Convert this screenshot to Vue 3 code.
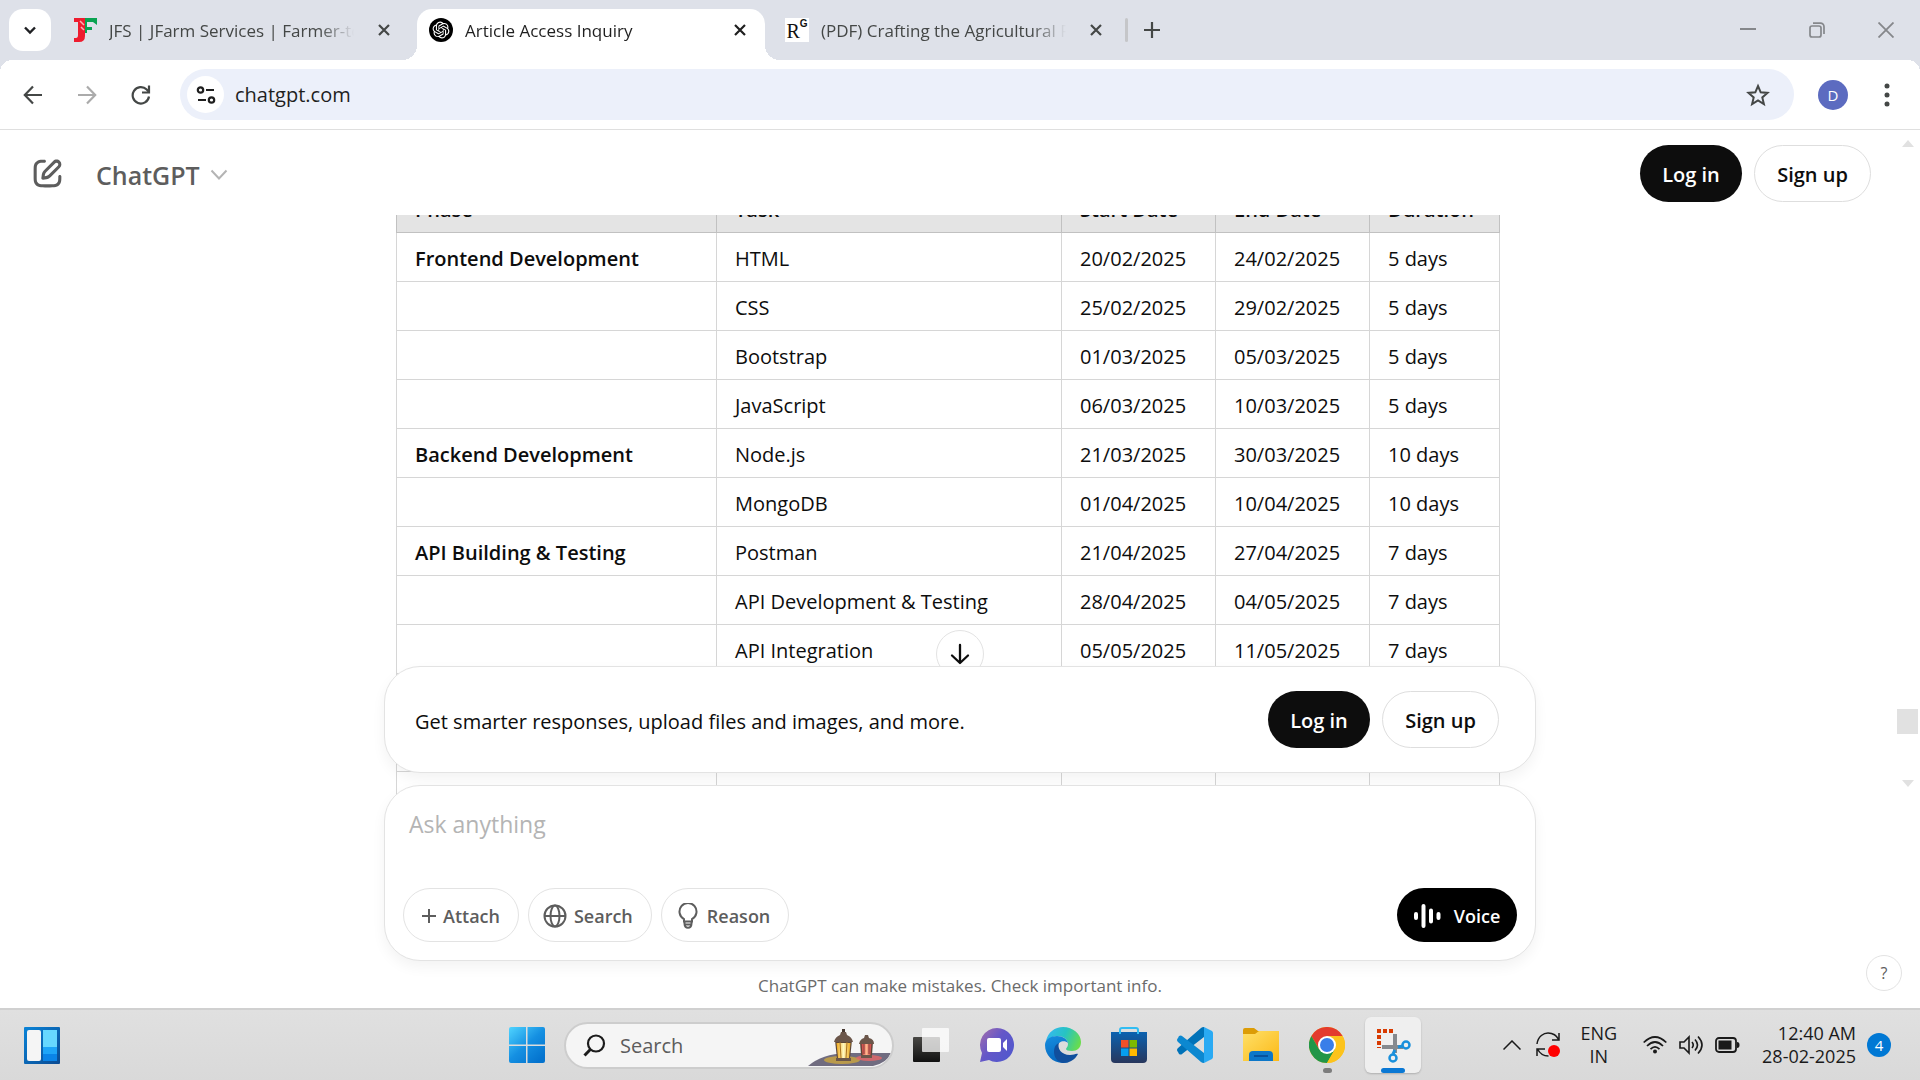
<script setup>
const columns = ['Phase', 'Task', 'Start Date', 'End Date', 'Duration']
const rows = [
  ['Frontend Development', 'HTML', '20/02/2025', '24/02/2025', '5 days'],
  ['', 'CSS', '25/02/2025', '29/02/2025', '5 days'],
  ['', 'Bootstrap', '01/03/2025', '05/03/2025', '5 days'],
  ['', 'JavaScript', '06/03/2025', '10/03/2025', '5 days'],
  ['Backend Development', 'Node.js', '21/03/2025', '30/03/2025', '10 days'],
  ['', 'MongoDB', '01/04/2025', '10/04/2025', '10 days'],
  ['API Building & Testing', 'Postman', '21/04/2025', '27/04/2025', '7 days'],
  ['', 'API Development & Testing', '28/04/2025', '04/05/2025', '7 days'],
  ['', 'API Integration', '05/05/2025', '11/05/2025', '7 days'],
  ['', '', '', '', ''],
  ['', '', '', '', ''],
  ['', '', '', '', ''],
]
</script>

<template>
  <div class="screen">
    <header class="tabstrip">
      <button class="tab-search" aria-label="Search tabs">
        <svg width="14" height="14" viewBox="0 0 14 14" fill="none" stroke="#1f2023" stroke-width="2.4"><path d="M2 4.5l5 5 5-5" /></svg>
      </button>
      <nav class="tabs">
        <div class="tab">
          <svg class="favicon" viewBox="0 0 24 24">
            <path d="M1 0h11v18q0 6-6 6H1v-4h2q2 0 2-3V4H1z" fill="#ee1c2e" />
            <path d="M12 0h12v7l-4-3h-6v5h5v3h-5v3h-2z" fill="#0aa351" />
            <path d="M7 3l4 4M8 9l3 3" stroke="#ffb0b4" stroke-width="1.5" />
          </svg>
          <a class="tab-title" href="#">JFS | JFarm Services | Farmer-to-Business</a>
          <button class="tab-close" aria-label="Close tab"><svg width="14" height="14" viewBox="0 0 14 14" stroke="#444746" stroke-width="2.2"><path d="M2 2l10 10M12 2L2 12" /></svg></button>
        </div>
        <div class="tab active">
          <svg class="favicon" viewBox="0 0 24 24">
            <circle cx="12" cy="12" r="12" fill="#000" />
            <g transform="translate(3.6 3.6) scale(.7)"><path fill="#fff" d="M22.2819 9.8211a5.9847 5.9847 0 0 0-.5157-4.9108 6.0462 6.0462 0 0 0-6.5098-2.9A6.0651 6.0651 0 0 0 4.9807 4.1818a5.9847 5.9847 0 0 0-3.9977 2.9 6.0462 6.0462 0 0 0 .7427 7.0966 5.98 5.98 0 0 0 .511 4.9107 6.051 6.051 0 0 0 6.5146 2.9001A5.9847 5.9847 0 0 0 13.2599 24a6.0557 6.0557 0 0 0 5.7718-4.2058 5.9894 5.9894 0 0 0 3.9977-2.9001 6.0557 6.0557 0 0 0-.7475-7.0729zm-9.022 12.6081a4.4755 4.4755 0 0 1-2.8764-1.0408l.1419-.0804 4.7783-2.7582a.7948.7948 0 0 0 .3927-.6813v-6.7369l2.02 1.1686a.071.071 0 0 1 .038.052v5.5826a4.504 4.504 0 0 1-4.4945 4.4944zm-9.6607-4.1254a4.4708 4.4708 0 0 1-.5346-3.0137l.142.0852 4.783 2.7582a.7712.7712 0 0 0 .7806 0l5.8428-3.3685v2.3324a.0804.0804 0 0 1-.0332.0615L9.74 19.9502a4.4992 4.4992 0 0 1-6.1408-1.6464zM2.3408 7.8956a4.485 4.485 0 0 1 2.3655-1.9728V11.6a.7664.7664 0 0 0 .3879.6765l5.8144 3.3543-2.0201 1.1685a.0757.0757 0 0 1-.071 0l-4.8303-2.7865A4.504 4.504 0 0 1 2.3408 7.872zm16.5963 3.8558L13.1038 8.364 15.1192 7.2a.0757.0757 0 0 1 .071 0l4.8303 2.7913a4.4944 4.4944 0 0 1-.6765 8.1042v-5.6772a.79.79 0 0 0-.407-.667zm2.0107-3.0231l-.142-.0852-4.7735-2.7818a.7759.7759 0 0 0-.7854 0L9.409 9.2297V6.8974a.0662.0662 0 0 1 .0284-.0615l4.8303-2.7866a4.4992 4.4992 0 0 1 6.6802 4.66zM8.3065 12.863l-2.02-1.1638a.0804.0804 0 0 1-.038-.0567V6.0742a4.4992 4.4992 0 0 1 7.3757-3.4537l-.142.0805L8.704 5.459a.7948.7948 0 0 0-.3927.6813zm1.0976-2.3654l2.602-1.4998 2.6069 1.4998v2.9994l-2.5974 1.4997-2.6067-1.4997Z" /></g>
          </svg>
          <a class="tab-title" href="#">Article Access Inquiry</a>
          <button class="tab-close" aria-label="Close tab"><svg width="14" height="14" viewBox="0 0 14 14" stroke="#1f1f1f" stroke-width="2.2"><path d="M2 2l10 10M12 2L2 12" /></svg></button>
        </div>
        <div class="tab">
          <span class="favicon rg">R<sup>G</sup></span>
          <a class="tab-title" href="#">(PDF) Crafting the Agricultural Platform</a>
          <button class="tab-close" aria-label="Close tab"><svg width="14" height="14" viewBox="0 0 14 14" stroke="#444746" stroke-width="2.2"><path d="M2 2l10 10M12 2L2 12" /></svg></button>
        </div>
      </nav>
      <span class="tab-divider"></span>
      <button class="new-tab" aria-label="New tab"><svg width="16" height="16" viewBox="0 0 16 16" stroke="#444746" stroke-width="2.2"><path d="M8 0v16M0 8h16" /></svg></button>
      <div class="window-controls">
        <button aria-label="Minimize"><svg width="16" height="16" viewBox="0 0 16 16" stroke="#85878b" stroke-width="2"><path d="M0 7h16" /></svg></button>
        <button aria-label="Restore"><svg width="16" height="16" viewBox="0 0 16 16" fill="none" stroke="#85878b" stroke-width="1.7"><rect x="1" y="4" width="11" height="11" rx="2" /><path d="M4 1.2h7.5a3.5 3.5 0 0 1 3.5 3.5V12" /></svg></button>
        <button aria-label="Close"><svg width="16" height="16" viewBox="0 0 16 16" stroke="#85878b" stroke-width="1.8"><path d="M.5.5l15 15M15.5.5l-15 15" /></svg></button>
      </div>
    </header>

    <div class="toolbar">
      <button class="tool" aria-label="Back"><svg width="20" height="20" viewBox="0 0 20 20" fill="none" stroke="#444746" stroke-width="2.2"><path d="M19 10H2M10 1.5L1.8 10l8.2 8.5" /></svg></button>
      <button class="tool" aria-label="Forward"><svg width="20" height="20" viewBox="0 0 20 20" fill="none" stroke="#ababab" stroke-width="2.2"><path d="M1 10h17M10 1.5l8.2 8.5-8.2 8.5" /></svg></button>
      <button class="tool" aria-label="Reload"><svg width="20" height="20" viewBox="0 0 20 20" fill="none" stroke="#444746" stroke-width="2.2"><path d="M18 11.5a8.200 8.200 0 1 1-2.300-7L18 7" /><path d="M18 .5V7.5h-7" /></svg></button>
      <div class="omnibox">
        <button class="site-info" aria-label="View site information"><svg width="20" height="20" viewBox="0 0 20 20" fill="none" stroke="#1f1f1f" stroke-width="2.2"><circle cx="4.5" cy="5" r="2.7" /><path d="M10 5h8M2 15h8" /><circle cx="15.5" cy="15" r="2.7" /></svg></button>
        <input class="address" aria-label="Address" value="chatgpt.com" />
        <button class="star" aria-label="Bookmark this tab"><svg width="24" height="24" viewBox="0 0 24 24" fill="none" stroke="#444746" stroke-width="2"><path d="M12 3l2.7 6.3 6.8.6-5.2 4.5 1.6 6.7L12 17.5 6.1 21.1l1.6-6.7L2.5 9.9l6.8-.6z" /></svg></button>
      </div>
      <button class="avatar" aria-label="Profile">D</button>
      <button class="menu" aria-label="Menu"><svg width="6" height="26" viewBox="0 0 6 26" fill="#444746"><circle cx="3" cy="4" r="2.5" /><circle cx="3" cy="13" r="2.5" /><circle cx="3" cy="22" r="2.5" /></svg></button>
    </div>

    <main class="page">
      <div class="page-head">
        <button class="compose" aria-label="New chat"><svg width="37" height="37" viewBox="0 0 24 24" fill="#5d5d5d"><path d="M15.6729 3.91287C16.8918 2.69392 18.8682 2.69392 20.0871 3.91287C21.3061 5.13182 21.3061 7.10813 20.0871 8.32708L14.1499 14.2643C13.3849 15.0293 12.3925 15.5255 11.3215 15.6785L9.14142 15.9899C8.82983 16.0344 8.51546 15.9297 8.29289 15.7071C8.07033 15.4845 7.96554 15.1701 8.01005 14.8586L8.32149 12.6785C8.47449 11.6075 8.97072 10.615 9.7357 9.85006L15.6729 3.91287ZM18.6729 5.32708C18.235 4.88918 17.525 4.88918 17.0871 5.32708L11.1499 11.2643C10.6909 11.7233 10.3932 12.3187 10.3014 12.9613L10.1785 13.8215L11.0386 13.6986C11.6812 13.6068 12.2767 13.3091 12.7357 12.8501L18.6729 6.91287C19.1108 6.47497 19.1108 5.76499 18.6729 5.32708ZM11 3.99929C11.0004 4.55157 10.5531 4.99963 10.0008 5.00007C9.00227 5.00084 8.29769 5.00827 7.74651 5.06064C7.20685 5.11191 6.88488 5.20117 6.63803 5.32695C6.07354 5.61457 5.6146 6.07351 5.32698 6.63799C5.19279 6.90135 5.10062 7.24904 5.05118 7.8542C5.00078 8.47105 5 9.26336 5 10.4V13.6C5 14.7366 5.00078 15.5289 5.05118 16.1457C5.10062 16.7509 5.19279 17.0986 5.32698 17.3619C5.6146 17.9264 6.07354 18.3854 6.63803 18.673C6.90138 18.8072 7.24907 18.8993 7.85424 18.9488C8.47108 18.9992 9.26339 19 10.4 19H13.6C14.7366 19 15.5289 18.9992 16.1458 18.9488C16.7509 18.8993 17.0986 18.8072 17.362 18.673C17.9265 18.3854 18.3854 17.9264 18.673 17.3619C18.7988 17.1151 18.8881 16.7931 18.9393 16.2535C18.9917 15.7023 18.9991 14.9977 18.9999 13.9992C19.0003 13.4469 19.4484 12.9995 20.0007 13C20.553 13.0004 21.0003 13.4485 20.9999 14.0007C20.9991 14.9789 20.9932 15.7808 20.9304 16.4426C20.8664 17.116 20.7385 17.7136 20.455 18.2699C19.9757 19.2107 19.2108 19.9756 18.27 20.455C17.6777 20.7568 17.0375 20.8826 16.3086 20.9421C15.6008 21 14.7266 21 13.6428 21H10.3572C9.27339 21 8.39925 21 7.69138 20.9421C6.96253 20.8826 6.32234 20.7568 5.73005 20.455C4.78924 19.9756 4.02433 19.2107 3.54497 18.2699C3.24318 17.6776 3.11737 17.0374 3.05782 16.3086C2.99998 15.6007 2.99999 14.7266 3 13.6428V10.3572C2.99999 9.27337 2.99998 8.39922 3.05782 7.69134C3.11737 6.96249 3.24318 6.3223 3.54497 5.73001C4.02433 4.7892 4.78924 4.0243 5.73005 3.54493C6.28633 3.26149 6.88399 3.13358 7.55735 3.06961C8.21919 3.00673 9.02103 3.00083 9.99922 3.00007C10.5515 2.99964 10.9996 3.447 11 3.99929Z" /></svg></button>
        <button class="model">ChatGPT <svg width="18" height="12" viewBox="0 0 18 12" fill="none" stroke="#b4b4b4" stroke-width="2"><path d="M1.5 1.5L9 9.5l7.5-8" /></svg></button>
        <div class="auth">
          <button class="pill dark">Log in</button>
          <button class="pill light">Sign up</button>
        </div>
      </div>

      <div class="thread">
        <div class="message">
          <table class="plan">
            <colgroup><col class="c-phase" /><col class="c-task" /><col class="c-date" /><col class="c-date" /><col class="c-days" /></colgroup>
            <thead>
              <tr><th v-for="c in columns" :key="c" scope="col">{{ c }}</th></tr>
            </thead>
            <tbody>
              <tr v-for="(r, i) in rows" :key="i">
                <td v-for="(cell, j) in r" :key="j"><strong v-if="j === 0">{{ cell }}</strong><template v-else>{{ cell }}</template></td>
              </tr>
            </tbody>
          </table>
        </div>

        <div class="dock">
          <button class="to-bottom" aria-label="Scroll to bottom"><svg width="20" height="22" viewBox="0 0 20 22" fill="none" stroke="#0d0d0d" stroke-width="2.3" stroke-linecap="round" stroke-linejoin="round"><path d="M10 2v18M2 12.5l8 7.5 8-7.5" /></svg></button>
          <section class="card promo">
            <p>Get smarter responses, upload files and images, and more.</p>
            <div class="auth">
              <button class="pill dark">Log in</button>
              <button class="pill light">Sign up</button>
            </div>
          </section>
          <form class="card composer" @submit.prevent>
            <textarea aria-label="Message" placeholder="Ask anything" rows="1"></textarea>
            <div class="actions">
              <button type="button" class="chip"><svg width="14" height="14" viewBox="0 0 14 14" stroke="#5d5d5d" stroke-width="2"><path d="M7 0v14M0 7h14" /></svg>Attach</button>
              <button type="button" class="chip wide"><svg width="24" height="24" viewBox="0 0 24 24" fill="none" stroke="#5d5d5d" stroke-width="2"><circle cx="12" cy="12" r="10.5" /><ellipse cx="12" cy="12" rx="4.5" ry="10.5" /><path d="M1.5 12h21" /></svg>Search</button>
              <button type="button" class="chip wide"><svg width="24" height="26" viewBox="0 0 24 26" fill="none" stroke="#5d5d5d" stroke-width="2"><path d="M8 18.500v-2.400A8.500 8.500 0 1 1 16 16.100v2.400zM8.500 18.500v2.200q.2 4 3.500 4t3.500-4v-2.200M9 21.500h6" /></svg>Reason</button>
              <button type="button" class="voice"><svg width="28" height="24" viewBox="0 0 28 24" stroke="#fff" stroke-width="4" stroke-linecap="round"><path d="M2 10v4M9.5 2v20M17 6.5v11M24.5 10v4" /></svg>Voice</button>
            </div>
          </form>
          <p class="note">ChatGPT can make mistakes. Check important info.</p>
        </div>
        <button class="help" aria-label="Help">?</button>
      </div>

      <div class="scrollbar" aria-hidden="true">
        <span class="arrow up"></span>
        <span class="thumb"></span>
        <span class="arrow down"></span>
      </div>
    </main>

    <footer class="taskbar">
      <button class="app" aria-label="Widgets">
        <svg width="36" height="37" viewBox="0 0 36 37">
          <defs><linearGradient id="wg" x1="0" y1="0" x2="1" y2="1"><stop offset="0" stop-color="#0a84d8" /><stop offset="1" stop-color="#0b4a92" /></linearGradient></defs>
          <rect width="36" height="37" rx="1" fill="url(#wg)" /><rect x="3" y="3" width="14" height="31" rx="2" fill="#f5f5f5" />
          <path d="M19 3h14v17H19z" fill="#67d8ff" /><path d="M19 20h14v7H19z" fill="#1ea5f8" /><path d="M19 27h14v7H19z" fill="#0a84e8" />
        </svg>
      </button>

      <div class="apps">
        <button class="app" aria-label="Start">
          <svg width="36" height="36" viewBox="0 0 36 36">
            <defs><linearGradient id="st" gradientUnits="userSpaceOnUse" x1="0" y1="0" x2="30" y2="34"><stop offset="0" stop-color="#50d4ff" /><stop offset=".55" stop-color="#1590e2" /><stop offset="1" stop-color="#0473ce" /></linearGradient></defs>
            <path fill="url(#st)" d="M2 0h15v17.5H0V2a2 2 0 0 1 2-2zM18.5 0H34a2 2 0 0 1 2 2v15.5H18.5zM0 19h17v17H2a2 2 0 0 1-2-2zM18.5 19H36v15a2 2 0 0 1-2 2H18.5z" />
          </svg>
        </button>
        <label class="search">
          <svg width="23" height="23" viewBox="0 0 23 23" fill="none" stroke="#1c1c1c" stroke-width="2.2"><circle cx="13" cy="9.5" r="8" /><path d="M7.3 15.5L1.5 21.5" stroke-width="3" /></svg>
          <input placeholder="Search" aria-label="Search" />
          <svg class="lanterns" width="84" height="38" viewBox="0 0 84 38">
            <defs><linearGradient id="gl"><stop offset="0" stop-color="#eea719" /><stop offset=".5" stop-color="#fff6bd" /><stop offset="1" stop-color="#eea719" /></linearGradient>
            <linearGradient id="gr"><stop offset="0" stop-color="#c53b40" /><stop offset=".5" stop-color="#ffb48c" /><stop offset="1" stop-color="#c53b40" /></linearGradient></defs>
            <path d="M0 37Q14 25 38 24h45q-4 10-18 13z" fill="#706c80" />
            <ellipse cx="34" cy="31" rx="18" ry="4" fill="#d9ae36" opacity=".7" /><ellipse cx="61" cy="29" rx="13" ry="3" fill="#e76868" opacity=".8" />
            <path d="M27 11h17l-2 19H29z" fill="#5c4638" /><path d="M28.5 14h14L41 29H30z" fill="url(#gl)" /><path d="M32 13l1 16M39 13l-1 16" stroke="#a8701f" /><path d="M26 13q1-5 6-7l1-3h5l1 3q5 2 6 7zM28 29h15v3H28z" fill="#6b564a" /><path d="M34 1.500h3" stroke="#463730" stroke-width="3" />
            <path d="M52 13h13l-1 13H53z" fill="#5c4638" /><path d="M53.500 15h10L62.500 26h-8z" fill="url(#gr)" /><path d="M56 15v10M61 15v10" stroke="#8b3434" /><path d="M51 15q1-5 5-6l1-3h3l1 3q5 1 5 6zM53 26h11v3H53z" fill="#6b564a" />
          </svg>
        </label>
        <button class="app" aria-label="Task view">
          <svg width="36" height="34" viewBox="0 0 36 34"><defs><linearGradient id="tv" x1="0" y1="0" x2="0" y2="1"><stop offset="0" stop-color="#484744" /><stop offset="1" stop-color="#111" /></linearGradient></defs><rect y="9" width="27" height="25" rx="1" fill="url(#tv)" /><rect x="9" width="27" height="24" rx="1" fill="#fff" opacity=".75" /></svg>
        </button>
        <button class="app" aria-label="Chat">
          <svg width="36" height="36" viewBox="0 0 36 36"><defs><linearGradient id="ch" x1="0" y1=".2" x2=".8" y2=".8"><stop offset="0" stop-color="#9a6ab0" /><stop offset=".5" stop-color="#6457c8" /><stop offset="1" stop-color="#5558cc" /></linearGradient></defs><path d="M18 1a17 17 0 1 1-8 32L1 35l2-9A17 17 0 0 1 18 1z" fill="url(#ch)" /><rect x="8" y="11" width="14" height="14" rx="2" fill="#fff" /><path d="M24 16l4-4v12l-4-4z" fill="#fff" /></svg>
        </button>
        <button class="app" aria-label="Edge">
          <svg width="36" height="36" viewBox="0 0 36 36">
            <defs>
              <linearGradient id="e1" x1="0" y1=".3" x2="1" y2=".6"><stop offset="0" stop-color="#35b8f0" /><stop offset=".5" stop-color="#27c3c2" /><stop offset="1" stop-color="#69dd4b" /></linearGradient>
              <linearGradient id="e2" x1="0" y1="0" x2=".3" y2="1"><stop offset="0" stop-color="#168ee0" /><stop offset="1" stop-color="#0669c0" /></linearGradient>
            </defs>
            <path d="M1 14C3 5 10 0 18 0c10 0 18 7 18 15 0 6-4 9-9 9-4 0-6-1-6-2s2-2 2-5c0-4-4-8-10-8-5 0-9 2-12 5z" fill="url(#e1)" />
            <path d="M0 18C0 12 6 9 12 9c6 0 10 3 11 7-3-3-10-2-11 4-1 7 5 13 12 15-13 4-24-5-24-17z" fill="url(#e2)" />
            <path d="M14 16c-2 5 2 12 11 12 4 0 6-2 8-1-3 6-9 9-15 9-6-1-9-6-9-11s2-8 5-9z" fill="#104f9d" />
          </svg>
        </button>
        <button class="app" aria-label="Store">
          <svg width="36" height="36" viewBox="0 0 36 36"><defs><linearGradient id="ms" x1="0" y1="0" x2="0" y2="1"><stop offset="0" stop-color="#0b62b0" /><stop offset="1" stop-color="#28375d" /></linearGradient></defs><path d="M0 5h36v27q0 4-4 4H4q-4 0-4-4z" fill="url(#ms)" /><path d="M9 7V3q0-2 2-2h14q2 0 2 2v4" fill="none" stroke="#32bdf2" stroke-width="2" /><path d="M10 13h7.5v7.5H10z" fill="#f2502a" /><path d="M18.5 13H26v7.5h-7.5z" fill="#7db902" /><path d="M10 21.5h7.5V29H10z" fill="#069fef" /><path d="M18.5 21.5H26V29h-7.5z" fill="#ffb901" /></svg>
        </button>
        <button class="app" aria-label="Visual Studio Code">
          <svg width="36" height="36" viewBox="0 0 36 36"><path d="M27 0v10L5 27q-1 1-3 0l-1-2q-2-2 0-4L24 1q1-1 3-1z" fill="#0072b8" /><path d="M27 36V26L5 9Q4 8 2 9l-1 2q-2 2 0 4l23 20q1 1 3 1z" fill="#0c88d0" /><path d="M27 0l8 4q1 1 1 2v24q0 1-1 2l-8 4z" fill="#2aaaf3" /></svg>
        </button>
        <button class="app" aria-label="File Explorer">
          <svg width="36" height="34" viewBox="0 0 36 34"><defs><linearGradient id="fe" x1="0" y1="0" x2="1" y2="1"><stop offset="0" stop-color="#ffe069" /><stop offset="1" stop-color="#fbb917" /></linearGradient></defs><path d="M0 2q0-2 2-2h9l4 3h19q2 0 2 2v8H0z" fill="#dc9c06" /><path d="M0 6h12l4-3h20v30H0z" fill="url(#fe)" /><path d="M6 33v-6q0-4 4-4h16q4 0 4 4v6z" fill="#0d77c8" /><path d="M11 28h14" stroke="#07529d" stroke-width="2" /></svg>
        </button>
        <button class="app running" aria-label="Chrome">
          <svg width="36" height="36" viewBox="0 0 36 36"><circle cx="18" cy="18" r="18" fill="#fcc31c" /><path d="M18 18V9h15.6A18 18 0 0 0 2.4 9l7.8 13.5z" fill="#e33b2e" /><path d="M18 18l7.8 4.5L18 36A18 18 0 0 1 2.4 9l7.8 13.5z" fill="#229648" /><path d="M18 9h15.6A18 18 0 0 1 18 36l7.8-13.5z" fill="#fcc31c" /><circle cx="18" cy="18" r="9" fill="#fff" /><circle cx="18" cy="18" r="7" fill="#397ee9" /></svg>
        </button>
        <button class="app current" aria-label="Snipping Tool">
          <span class="tile"><svg width="36" height="36" viewBox="0 0 36 36" fill="none"><path d="M2 4h18M4 8v13" stroke="#d83b01" stroke-width="4" stroke-dasharray="4 2" /><path d="M20 7v19M7 20h21" stroke="#858a8f" stroke-width="4" /><circle cx="18" cy="31" r="3.5" stroke="#1990dc" stroke-width="2.5" /><circle cx="31" cy="18" r="3.5" stroke="#1990dc" stroke-width="2.5" /><path d="M18 27l2-4M23 20l5-1" stroke="#1990dc" stroke-width="3" /></svg></span>
        </button>
      </div>

      <div class="tray">
        <svg width="18" height="10" viewBox="0 0 18 10" fill="none" stroke="#1a1a1a" stroke-width="1.5"><path d="M.5 9.5L9 1l8.5 8.5" /></svg>
        <svg class="sync" width="24" height="26" viewBox="0 0 24 26" fill="none" stroke="#1a1a1a" stroke-width="1.5"><path d="M1 12C2 4 8 1 12 1c5 0 9 3 11 7M23 1v7h-7M1 24v-7h8M1.5 17c2 4 6 7 11 7" /><circle cx="18" cy="19" r="6" fill="#f00" stroke="none" /></svg>
        <div class="lang">ENG<br />IN</div>
        <svg width="24" height="18" viewBox="0 0 24 18" fill="none" stroke="#1a1a1a" stroke-width="1.7"><path d="M.7 6.5q11.3-11 22.6 0M4 10q8-8 16 0M7.5 13.2q4.500-4.500 9 0" /><circle cx="12" cy="15.5" r="2" fill="#1a1a1a" stroke="none" /></svg>
        <svg width="24" height="20" viewBox="0 0 24 20" fill="none" stroke="#1a1a1a" stroke-width="1.6"><path d="M1 7v6h4l5 5V2L5 7zM13 7q2.500 3 0 6M16 4.500q5 5.500 0 11M19 1.500q8 8.500 0 17" /></svg>
        <svg width="25" height="16" viewBox="0 0 25 16"><rect x="1" y="1" width="20" height="14" rx="3" fill="none" stroke="#1a1a1a" stroke-width="1.8" /><rect x="3.5" y="3.5" width="13" height="9" fill="#1a1a1a" /><path d="M22 5q2.500 0 2.500 3T22 11z" fill="#1a1a1a" /></svg>
        <div class="clock">12:40 AM<br />28-02-2025</div>
        <span class="badge">4</span>
      </div>
    </footer>
  </div>
</template>

<style>
body { margin: 0; }
</style>

<style scoped>
* { box-sizing: border-box; }
.screen { display: flex; flex-direction: column; height: 100vh; overflow: hidden; background: #fff; color: #0d0d0d; font-family: "Open Sans", "Noto Sans", sans-serif; font-size: 20px; }
button { padding: 0; border: 0; background: none; color: inherit; font: inherit; display: inline-flex; align-items: center; justify-content: center; flex: none; white-space: nowrap; }
input, textarea { border: 0; outline: 0; background: none; color: inherit; font: inherit; padding: 0; min-width: 0; }
svg { display: block; flex: none; }
p { margin: 0; }

.tabstrip { display: flex; align-items: center; height: 60px; flex: none; padding-left: 9px; background: #dee1e9; }
.tab-search { width: 42px; height: 42px; border-radius: 14px; background: #fff; margin-right: 10px; }
.tabs { display: flex; gap: 8px; align-self: flex-end; }
.tab { position: relative; display: flex; align-items: center; width: 348px; height: 51px; padding: 0 12px 9px; color: #444746; }
.tab.active { background: #fff; color: #1f1f1f; border-radius: 15px 15px 0 0; }
.tab.active::before, .tab.active::after { content: ""; position: absolute; bottom: 0; width: 15px; height: 15px; }
.tab.active::before { right: 100%; background: radial-gradient(circle at 0 0, transparent 15px, #fff 15px); }
.tab.active::after { left: 100%; background: radial-gradient(circle at 100% 0, transparent 15px, #fff 15px); }
.favicon { width: 24px; height: 24px; margin-right: 12px; flex: none; }
.rg { display: flex; justify-content: center; background: #fff; color: #111; font: 20px/26px "Liberation Serif", serif; }
.rg sup { font: 700 10px/12px "Liberation Sans", sans-serif; }
.tab-title { flex: 1; overflow: hidden; padding-top: 2px; white-space: nowrap; color: inherit; text-decoration: none; font-size: 17px; line-height: 26px; mask-image: linear-gradient(90deg, #000 84%, transparent 98%); }
.tab-close { width: 26px; height: 26px; margin-left: 12px; }
.tab-divider { width: 3px; height: 24px; margin-left: 4px; border-radius: 2px; background: #c5c6c9; }
.new-tab { width: 48px; height: 42px; }
.window-controls { display: flex; margin-left: auto; }
.window-controls button { width: 69px; height: 60px; }

.toolbar { position: relative; z-index: 0; display: flex; align-items: center; flex: none; height: 70px; padding-left: 6px; background: #fff; border-bottom: 1px solid #dfdfdf; }
.toolbar::before { content: ""; position: absolute; inset: 0; z-index: -1; background: radial-gradient(circle at 12px 12px, transparent 12px, #dee1e9 12px) 0 0 / 12px 12px no-repeat, radial-gradient(circle at 0 12px, transparent 12px, #dee1e9 12px) 100% 0 / 12px 12px no-repeat; }
.tool { width: 54px; height: 42px; }
.omnibox { display: flex; align-items: center; flex: 1; height: 51px; margin-left: 12px; padding: 0 24px 0 7px; border-radius: 26px; background: #ecf0fa; }
.site-info { width: 37px; height: 37px; border-radius: 50%; background: #fff; }
.address { flex: 1; margin-left: 11px; color: #1f1f1f; }
.avatar { width: 30px; height: 30px; margin-left: 24px; border-radius: 50%; background: #5c6bc0; color: #fff; font-size: 15px; }
.menu { width: 30px; height: 30px; margin: 0 18px 0 24px; }

.page { position: relative; display: flex; flex-direction: column; flex: 1; min-height: 0; }
.page-head { display: flex; align-items: center; flex: none; height: 85px; padding: 2px 49px 0 29px; }
.compose { width: 37px; height: 37px; }
.model { margin-left: 30px; gap: 10px; padding-top: 2px; color: #5d5d5d; font-size: 25px; font-weight: 600; }
.auth { display: flex; gap: 12px; margin-left: auto; }
.pill { height: 57px; padding-top: 2px; border-radius: 29px; font-weight: 600; }
.dark { width: 102px; background: #0d0d0d; color: #fff; }
.light { width: 117px; border: 1px solid #dedede; background: #fff; }

.thread { position: relative; flex: 1; min-height: 0; overflow: hidden; }
.message { width: 60%; margin: 0 auto; padding-left: 12px; }
.plan { table-layout: fixed; width: 1104px; margin-top: -32px; border-collapse: collapse; line-height: 28px; }
.c-phase { width: 320px; }
.c-task { width: 345px; }
.c-date { width: 154px; }
.plan th, .plan td { height: 49px; padding: 4px 18px 0; border: 1px solid #d6d6d6; text-align: left; white-space: nowrap; }
.plan th { background: #e4e4e4; border-color: #c1c1c1; font-weight: 600; }
.plan strong { font-weight: 600; }

.dock { position: absolute; left: 0; right: 0; bottom: 0; display: flex; flex-direction: column; align-items: center; }
.to-bottom { width: 48px; height: 48px; margin-bottom: -12px; border: 1px solid #e3e3e3; border-radius: 50%; background: #fff; }
.card { width: 60%; border: 1px solid #e3e3e3; border-radius: 36px; background: #fff; box-shadow: 0 6px 14px rgba(0, 0, 0, .05); }
.promo { position: relative; display: flex; align-items: center; height: 107px; padding: 0 36px 0 30px; }
.promo p { padding-top: 3px; }
.composer { position: relative; margin-top: 12px; padding: 18px; }
.composer textarea { display: block; width: 100%; height: 84px; padding: 0 6px; font-size: 23px; line-height: 40px; resize: none; overflow: hidden; }
.composer textarea::placeholder { color: #b4b4b4; opacity: 1; }
.actions { display: flex; gap: 9px; color: #5d5d5d; font-size: 18px; font-weight: 600; line-height: 28px; }
.chip { height: 54px; padding: 2px 18px 0; gap: 7px; border: 1px solid #e3e3e3; border-radius: 27px; }
.chip.wide { padding: 2px 18px 0 14px; }
.voice { height: 54px; width: 120px; gap: 12px; margin-left: auto; padding-top: 2px; border-radius: 27px; background: #000; color: #fff; }
.note { height: 47px; color: #6b6b6b; font-size: 17px; line-height: 50px; }
.help { position: absolute; right: 18px; bottom: 17px; width: 36px; height: 36px; border: 1px solid #e3e3e3; border-radius: 50%; background: #fff; color: #5d5d5d; font-size: 16px; }

.scrollbar { position: absolute; top: 10px; right: 2px; bottom: 221px; width: 21px; display: flex; flex-direction: column; align-items: center; }
.thumb { width: 21px; height: 25px; margin: auto 0 46px; background: #e1e1e1; }
.arrow { border: 6px solid transparent; border-top-width: 0; border-bottom-width: 0; }
.up { border-bottom: 7px solid #e1e1e1; }
.down { border-top: 7px solid #e1e1e1; }

.taskbar { display: grid; grid-template-columns: 1fr auto 1fr; align-items: center; flex: none; height: 72px; background: linear-gradient(#e0e0e0, #d9d9d9); border-top: 2px solid #d0d0d0; }
.taskbar > .app { margin-left: 9px; }
.apps { display: flex; align-items: center; }
.app { position: relative; width: 66px; height: 56px; }
.search { position: relative; display: flex; align-items: center; width: 330px; height: 47px; margin: 0 4px; padding-left: 17px; gap: 14px; border: 2px solid #cdcdcd; border-radius: 24px; background: #f5f5f5; overflow: hidden; }
.search input { flex: 1; color: #5c5c5c; }
.search input::placeholder { color: #5c5c5c; opacity: 1; }
.lanterns { align-self: flex-end; }
.running::after, .current::after { content: ""; position: absolute; bottom: 0; width: 9px; height: 5px; border-radius: 3px; background: #7d7d7d; }
.current::after { width: 24px; background: #0a78d4; }
.tile { display: flex; align-items: center; justify-content: center; width: 56px; height: 56px; border-radius: 6px; background: #efefef; box-shadow: 0 1px 2px rgba(0, 0, 0, .2); }
.tray { display: flex; align-items: center; justify-content: flex-end; padding-right: 29px; color: #1a1a1a; font-size: 18px; line-height: 23px; white-space: nowrap; }
.tray > * { margin-left: 12px; }
.tray .sync { margin-left: 15px; }
.tray .lang { text-align: center; margin: 0 10px 0 20px; }
.tray .lang + svg { margin-left: 16px; }
.tray .clock { margin-left: 22px; text-align: right; }
.tray .badge { width: 24px; height: 24px; margin-left: 11px; border-radius: 50%; background: #0078d4; color: #fff; font-size: 15px; line-height: 24px; text-align: center; }
</style>
